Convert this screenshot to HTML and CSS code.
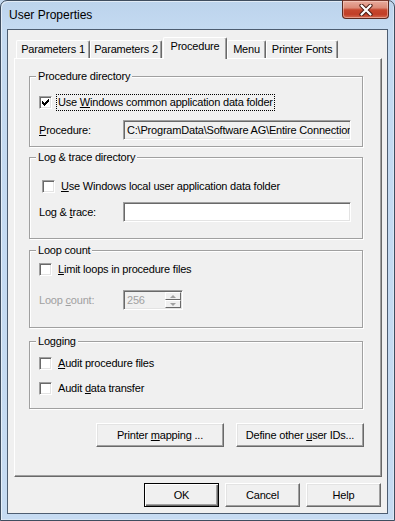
FILE: index.html
```html
<!DOCTYPE html>
<html>
<head>
<meta charset="utf-8">
<title>User Properties</title>
<link rel="stylesheet" href="styles.css">
</head>
<body>
<div class="window">
  <div class="titlebar">
    <span class="title">User Properties</span>
    <div class="close">
      <svg width="14" height="12" viewBox="0 0 14 12">
        <path d="M2.5 1.5 L11.5 10.5 M11.5 1.5 L2.5 10.5" stroke="#4a1c14" stroke-width="4.2" stroke-linecap="round" fill="none"/>
        <path d="M2.5 1.5 L11.5 10.5 M11.5 1.5 L2.5 10.5" stroke="#ffffff" stroke-width="2.2" stroke-linecap="round" fill="none"/>
      </svg>
    </div>
  </div>
  <div class="client">
    <div class="tabctl">
      <div class="tabs">
        <div class="tab w-p1">Parameters 1</div>
        <div class="tab w-p2">Parameters 2</div>
        <div class="tab sel w-proc">Procedure</div>
        <div class="tab w-menu">Menu</div>
        <div class="tab w-pf">Printer Fonts</div>
      </div>
      <div class="panel">
        <fieldset class="grp g1">
          <legend>Procedure directory</legend>
          <div class="chkrow r-g1a">
            <span class="chk">
              <svg width="7" height="7" viewBox="0 0 7 7" shape-rendering="crispEdges"><path d="M6 0h1v3h-1zM5 1h1v3h-1zM4 2h1v3h-1zM3 3h1v3h-1zM2 4h1v3h-1zM1 3h1v3h-1zM0 2h1v3h-1z" fill="#000"/></svg>
            </span>
            <span class="lbl focus">Use <u>W</u>indows common application data folder</span>
          </div>
          <div class="fieldrow r-g1b">
            <span class="flabel"><u>P</u>rocedure:</span>
            <div class="edit ro">C:\ProgramData\Software AG\Entire Connection</div>
          </div>
        </fieldset>

        <fieldset class="grp g2">
          <legend>Log &amp; trace directory</legend>
          <div class="chkrow r-g2a">
            <span class="chk"></span>
            <span class="lbl"><u>U</u>se Windows local user application data folder</span>
          </div>
          <div class="fieldrow r-g2b">
            <span class="flabel">Log &amp; <u>t</u>race:</span>
            <div class="edit"></div>
          </div>
        </fieldset>

        <fieldset class="grp g3">
          <legend>Loop count</legend>
          <div class="chkrow r-g3a">
            <span class="chk"></span>
            <span class="lbl"><u>L</u>imit loops in procedure files</span>
          </div>
          <div class="fieldrow r-g3b">
            <span class="flabel disabled">Loop <u>c</u>ount:</span>
            <div class="edit spin">
              <span class="spinval">256</span>
              <span class="spinbtns">
                <span class="sbtn"><span class="arr up"></span></span>
                <span class="sbtn"><span class="arr down"></span></span>
              </span>
            </div>
          </div>
        </fieldset>

        <fieldset class="grp g4">
          <legend>Logging</legend>
          <div class="chkrow r-g4a">
            <span class="chk"></span>
            <span class="lbl"><u>A</u>udit procedure files</span>
          </div>
          <div class="chkrow r-g4b">
            <span class="chk"></span>
            <span class="lbl">Audit <u>d</u>ata transfer</span>
          </div>
        </fieldset>

        <div class="panelbtns">
          <button class="btn wide">Printer <u>m</u>apping ...</button>
          <button class="btn wide">Define other <u>u</u>ser IDs...</button>
        </div>
      </div>
    </div>
    <div class="dlgbtns">
      <button class="btn def">OK</button>
      <button class="btn">Cancel</button>
      <button class="btn">Help</button>
    </div>
  </div>
</div>
</body>
</html>
```
FILE: styles.css
```css
* { box-sizing: border-box; }
html, body { margin: 0; padding: 0; background: #c4d9f0; }
body {
  font-family: "Liberation Sans", Arial, sans-serif;
  font-size: 11px;
  color: #000;
}

.window {
  width: 395px;
  height: 521px;
  border: 1px solid #3f4d5f;
  border-radius: 7px 7px 0 0;
  background: linear-gradient(180deg, #bcd3ec 0px, #c4daf1 28px, #c6dbf2 100%);
  box-shadow: inset 1px 1px 0 rgba(255,255,255,0.55), inset -1px -1px 0 rgba(255,255,255,0.35);
  display: flex;
  flex-direction: column;
  padding: 0 6px 6px 6px;
}

.titlebar {
  height: 28px;
  margin: 0 -6px;
  padding: 0 5px 0 7px;
  display: flex;
  align-items: flex-start;
  flex: none;
}
.title {
  margin-top: 7px;
  line-height: 15px;
  font-size: 12px;
  letter-spacing: 0;
  margin-left: 1px;
}
.close {
  margin-left: auto;
  margin-top: -1px;
  width: 47px;
  height: 19px;
  border: 1px solid #5b2a21;
  border-top-color: #7a3a2e;
  border-radius: 0 0 4px 4px;
  background: linear-gradient(180deg, #e8ab9d 0%, #dc8b78 40%, #c6472f 52%, #c13e27 78%, #d46a52 100%);
  box-shadow: inset 0 0 0 1px rgba(255,225,215,0.45);
  display: flex;
  align-items: center;
  justify-content: center;
}
.close svg { display: block; margin-top: 1px; }

.client {
  flex: 1;
  border: 1px solid #4d5d71;
  background: #f0f0f0;
  padding: 7px 5px 6px 6px;
  display: flex;
  flex-direction: column;
  letter-spacing: -0.2px;
}

/* tabs */
.tabctl { display: flex; flex-direction: column; }
.tabs {
  height: 21px;
  display: flex;
  align-items: flex-end;
  padding-left: 2px;
}
.tab {
  height: 18px;
  line-height: 16px;
  padding-top: 0;
  text-align: center;
  background: #f0f0f0;
  border-top: 1px solid #fff;
  border-left: 1px solid #fff;
  border-right: 1px solid #696969;
  border-radius: 2px 2px 0 0;
  box-shadow: inset -1px 0 0 #a0a0a0;
  white-space: nowrap;
}
.tab.sel {
  height: 22px;
  line-height: 17px;
  margin-bottom: -1px;
  position: relative;
  z-index: 1;
}
.w-p1 { width: 74px; }
.w-p2 { width: 72px; }
.w-proc { width: 64px; margin-left: 1px; }
.w-menu { width: 39px; }
.w-pf { width: 72px; }

.panel {
  height: 419px;
  border-top: 1px solid #fff;
  border-left: 1px solid #fff;
  border-right: 1px solid #696969;
  border-bottom: 1px solid #696969;
  box-shadow: inset -1px -1px 0 #a0a0a0;
  padding-left: 14px;
  display: flex;
  flex-direction: column;
  align-items: flex-start;
}

/* group boxes */
.grp {
  width: 334px;
  margin: 0;
  padding: 0;
  min-inline-size: 0;
  border: 1px solid #a0a0a0;
  box-shadow: inset 1px 1px 0 #fff, 1px 1px 0 #fff;
}
.grp legend {
  margin-left: 6px;
  padding: 0 2px;
  line-height: 13px;
  background: #f0f0f0;
}
.g1 { margin-top: 11px; padding-bottom: 6px; }
.g2 { margin-top: 4px; padding-bottom: 16px; }
.g3 { margin-top: 5px; padding-bottom: 17px; }
.g4 { margin-top: 7px; padding-bottom: 11px; }

.chkrow {
  height: 17px;
  display: flex;
  align-items: center;
  padding-left: 9px;
}
.r-g1a { margin-top: 11px; }
.r-g2a { margin-top: 14px; padding-left: 12px; }
.r-g3a { margin-top: 4px; }
.r-g4a { margin-top: 7px; }
.r-g4b { margin-top: 8px; }

.chk {
  width: 13px;
  height: 13px;
  flex: none;
  background: #fff;
  border: 1px solid;
  border-color: #a0a0a0 #fff #fff #a0a0a0;
  box-shadow: inset 1px 1px 0 #696969, inset -1px -1px 0 #e3e3e3;
  padding: 2px 0 0 2px;
}
.chk svg { display: block; }

.lbl {
  margin-left: 4px;
  padding: 0 1px;
  line-height: 15px;
  border: 1px solid transparent;
  white-space: nowrap;
}
.lbl.focus { border: 1px dotted #000; }

.fieldrow {
  height: 20px;
  display: flex;
  align-items: center;
  padding-left: 9px;
}
.r-g1b { margin-top: 9px; }
.r-g2b { margin-top: 7px; }
.r-g3b { margin-top: 12px; }

.flabel { width: 84px; flex: none; white-space: nowrap; }
.disabled { color: #a0a0a0; }

.edit {
  width: 228px;
  height: 20px;
  border: 1px solid;
  border-color: #a0a0a0 #fff #fff #a0a0a0;
  box-shadow: inset 1px 1px 0 #696969, inset -1px -1px 0 #e3e3e3;
  background: #fff;
  padding: 0 2px 0 3px;
  line-height: 18px;
  white-space: nowrap;
  overflow: hidden;
}
.edit.ro {
  background: #f0f0f0;
  text-overflow: clip;
}
.edit.spin {
  width: 60px;
  background: #f0f0f0;
  display: flex;
  padding: 1px 1px 1px 3px;
  line-height: 16px;
}
.spinval { color: #a0a0a0; flex: 1; }
.spinbtns {
  width: 16px;
  display: flex;
  flex-direction: column;
}
.sbtn {
  height: 8px;
  background: #f0f0f0;
  border: 1px solid;
  border-color: #fff #696969 #696969 #fff;
  display: flex;
  align-items: center;
  justify-content: center;
}
.arr { width: 0; height: 0; border-left: 3px solid transparent; border-right: 3px solid transparent; }
.arr.up { border-bottom: 3px solid #a0a0a0; }
.arr.down { border-top: 3px solid #a0a0a0; }

/* buttons */
.btn {
  font-family: "Liberation Sans", Arial, sans-serif;
  font-size: 11px;
  letter-spacing: -0.2px;
  color: #000;
  height: 24px;
  width: 75px;
  padding: 0;
  margin: 0;
  background: #f0f0f0;
  border: 1px solid;
  border-color: #fff #696969 #696969 #fff;
  box-shadow: inset -1px -1px 0 #a0a0a0, inset 1px 1px 0 #e3e3e3;
  border-radius: 0;
}
.btn.wide { width: 128px; }
.btn.def {
  border: 1px solid #000;
  box-shadow: inset 1px 1px 0 #fff, inset -1px -1px 0 #696969, inset -2px -2px 0 #a0a0a0;
}

.panelbtns {
  width: 335px;
  margin-top: 14px;
  display: flex;
  justify-content: flex-end;
  gap: 12px;
}

.dlgbtns {
  margin-top: 6px;
  padding-right: 1px;
  display: flex;
  justify-content: flex-end;
  gap: 6px;
}
```
